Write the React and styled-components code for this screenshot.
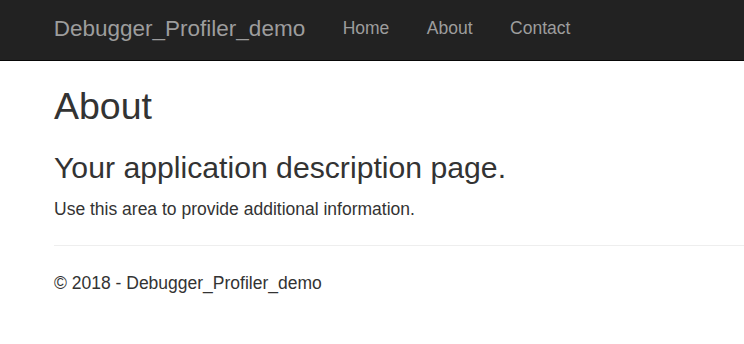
import styled, { createGlobalStyle } from 'styled-components'

const GlobalStyle = createGlobalStyle`
    html, body {
        margin: 0;
        padding: 0;
        background: #fff;
    }
    body {
        font-family: "Liberation Sans", Arial, Helvetica, sans-serif;
        font-size: 17.5px;
        line-height: 1.42857;
        color: #333;
        overflow: hidden;
    }
    * {
        box-sizing: border-box;
    }
`

const Navbar = styled.nav`
    height: 61px;
    background: #222;
    border-bottom: 1px solid #080808;
    display: flex;
    align-items: center;
    padding-left: 35px;
`

const Brand = styled.a`
    font-size: 22.5px;
    line-height: 25px;
    padding: 0 18.75px 3px;
    color: #9d9d9d;
    text-decoration: none;
`

const NavList = styled.ul`
    display: flex;
    list-style: none;
    margin: 0;
    padding: 0 0 4px;

    li a {
        display: block;
        padding: 0 18.75px;
        line-height: 25px;
        color: #9d9d9d;
        text-decoration: none;
    }
`

const Content = styled.main`
    padding-left: 54px;

    h2 {
        font-size: 37.5px;
        font-weight: 500;
        line-height: 1.1;
        margin: 25px 0 12.5px;
    }
    h3 {
        font-size: 30.2px;
        font-weight: 500;
        line-height: 1.1;
        margin: 24px 0 12.5px;
    }
    p {
        margin: 0 0 12.5px;
    }
`

const Rule = styled.hr`
    margin: 23px 0 25px;
    border: 0;
    border-top: 1px solid #eee;
`

const Footer = styled.footer`
    p {
        margin: 0;
    }
`

const links = ['Home', 'About', 'Contact']

const App = () => {
    return (
        <>
            <GlobalStyle />
            <Navbar>
                <Brand href="#">Debugger_Profiler_demo</Brand>
                <NavList>
                    {links.map(link => (
                        <li key={link}><a href="#">{link}</a></li>
                    ))}
                </NavList>
            </Navbar>
            <Content>
                <h2>About</h2>
                <h3>Your application description page.</h3>
                <p>Use this area to provide additional information.</p>
                <Rule />
                <Footer>
                    <p>&copy; 2018 - Debugger_Profiler_demo</p>
                </Footer>
            </Content>
        </>
    )
}

export default App
